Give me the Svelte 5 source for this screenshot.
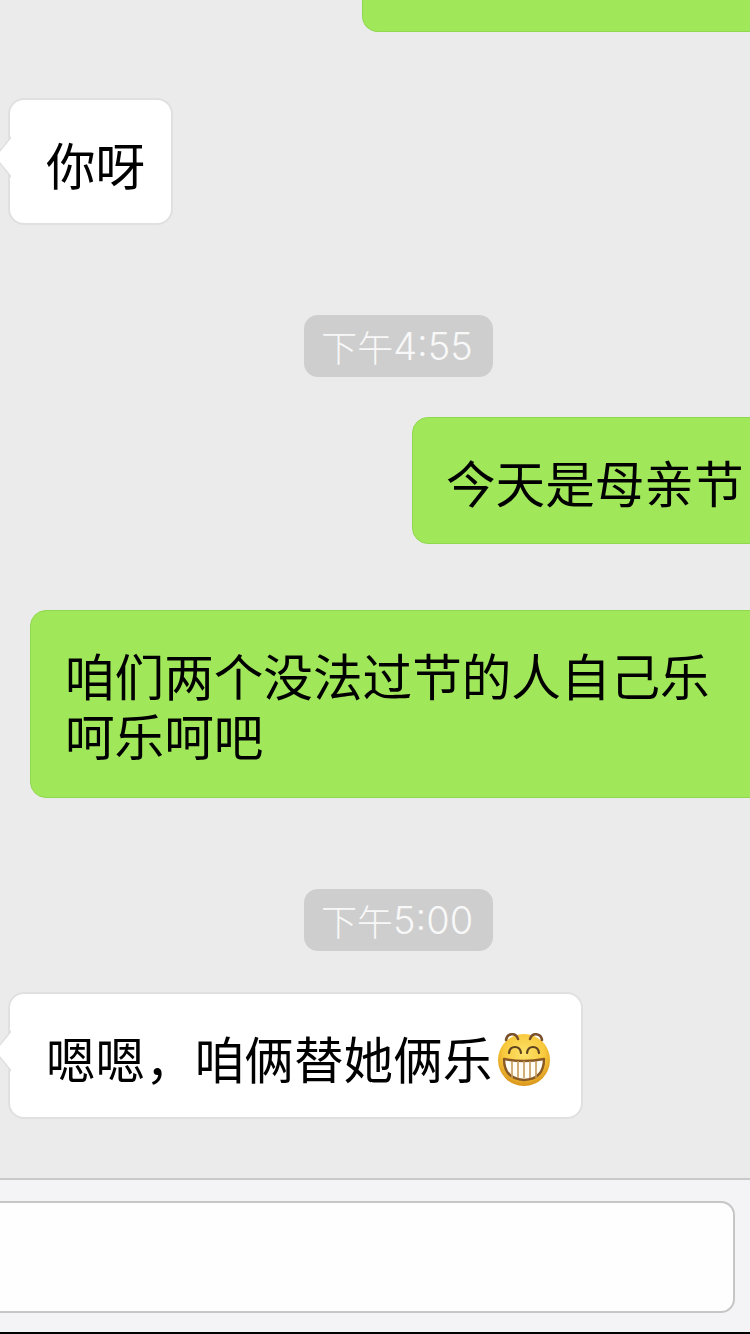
<script>
  const face = { cx: 28, cy: 29, r: 26 };
  const teeth = [16, 22, 28, 34, 40];
</script>

<div class="screen">
  <main class="chat">
    <div class="bubble mine top"></div>

    <div class="bubble theirs first">你呀</div>

    <div class="stamp first-stamp"><span>下午</span><span class="digits">4:55</span></div>

    <div class="bubble mine festival">今天是母亲节</div>
    <div class="bubble mine wide">咱们两个没法过节的人自己乐呵乐呵吧</div>

    <div class="stamp second-stamp"><span>下午</span><span class="digits">5:00</span></div>

    <div class="bubble theirs reply">
      <span>嗯嗯，咱俩替她俩乐</span>
      <svg class="emoji" viewBox="0 0 56 58" aria-hidden="true">
        <defs>
          <radialGradient id="skin" cx="50%" cy="38%" r="62%">
            <stop offset="0" stop-color="#fde26a" />
            <stop offset="0.65" stop-color="#f8c93c" />
            <stop offset="1" stop-color="#d9931a" />
          </radialGradient>
        </defs>
        <circle cx={face.cx} cy={face.cy} r={face.r} fill="url(#skin)" />
        <path class="brow" d="M10 9C11 2 20 1 22 8" />
        <path class="brow" d="M34 8C36 1 45 2 46 9" />
        <path class="eye" d="M13 22C14 14 24 14 25 22" />
        <path class="eye" d="M31 22C32 14 42 14 43 22" />
        <path class="mouth" d="M8 28Q28 32 48 28Q48 48 28 49Q8 48 8 28Z" />
        {#each teeth as x}
          <path class="gap" d="M{x} 30V47" />
        {/each}
      </svg>
    </div>
  </main>

  <footer class="bar">
    <div class="field"></div>
  </footer>
</div>

<style>
  :global(body) {
    margin: 0;
    background: #ebebeb;
  }

  .screen {
    width: 750px;
    height: 1334px;
    display: flex;
    flex-direction: column;
    overflow: hidden;
    background: #ebebeb;
    font-family: "Noto Sans CJK SC", "Noto Sans", sans-serif;
    color: #000;
  }

  .chat {
    flex: 1;
    display: flex;
    flex-direction: column;
    align-items: flex-start;
    min-height: 0;
  }

  .bubble {
    position: relative;
    box-sizing: border-box;
    font-size: 49.6px;
    line-height: 60px;
    border-radius: 16px;
    padding: 33px 36px;
  }

  .mine {
    align-self: flex-end;
    background: #a0e75a;
    border: 1px solid #91d851;
    margin-right: -16px;
  }

  .theirs {
    background: #fff;
    border: 2px solid #e0e0e0;
    margin-left: 8px;
  }

  .theirs::before,
  .theirs::after {
    content: "";
    position: absolute;
    top: 36px;
    width: 17px;
    height: 42px;
    clip-path: polygon(100% 0, 0 50%, 100% 100%);
  }

  .theirs::before {
    left: -16px;
    background: #e0e0e0;
  }

  .theirs::after {
    left: -14px;
    background: #fff;
  }

  .top {
    width: 404px;
    height: 32px;
    padding: 0;
    border-top: 0;
    border-top-left-radius: 0;
    border-top-right-radius: 0;
  }

  .first {
    margin-top: 66px;
    width: 165px;
    height: 127px;
    padding: 33px 0 0 36px;
    white-space: nowrap;
  }

  .stamp {
    align-self: flex-start;
    margin-left: 304px;
    width: 189px;
    height: 62px;
    box-sizing: border-box;
    padding-right: 3px;
    background: #cecece;
    border-radius: 14px;
    color: #f8f8f8;
    font-size: 36px;
    font-weight: 300;
    display: flex;
    align-items: center;
    justify-content: center;
  }

  .digits {
    font-family: "Inter", "Liberation Sans", sans-serif;
    font-weight: 300;
    font-size: 38px;
  }

  .first-stamp {
    margin-top: 90px;
  }

  .second-stamp {
    margin-top: 91px;
  }

  .festival {
    margin-top: 40px;
    width: 354px;
    height: 127px;
    padding-left: 33px;
    white-space: nowrap;
  }

  .wide {
    margin-top: 66px;
    width: 736px;
    height: 188px;
    padding: 33px 40px 0 34px;
  }

  .reply {
    margin-top: 41px;
    width: 575px;
    height: 127px;
    padding: 33px 0 0 36px;
    display: flex;
    align-items: flex-start;
    white-space: nowrap;
  }

  .emoji {
    width: 56px;
    height: 58px;
    margin-left: 4px;
    margin-top: 4px;
    flex: none;
  }

  .brow {
    fill: none;
    stroke: #7a4f2a;
    stroke-width: 2.6;
    stroke-linecap: round;
  }

  .eye {
    fill: none;
    stroke: #5f4320;
    stroke-width: 2.2;
    stroke-linecap: round;
  }

  .mouth {
    fill: #fffdf4;
    stroke: #8a5a24;
    stroke-width: 2.4;
    stroke-linejoin: round;
  }

  .gap {
    stroke: #c79a5a;
    stroke-width: 1.6;
  }

  .bar {
    box-sizing: border-box;
    flex: none;
    height: 156px;
    padding-top: 21px;
    background: #f4f4f6;
    border-top: 2px solid #c9c9c9;
    border-bottom: 2px solid #000;
  }

  .field {
    box-sizing: border-box;
    width: 755px;
    margin-left: -20px;
    height: 112px;
    background: #fefefe;
    border: 2px solid #c6c6c6;
    border-radius: 14px;
  }
</style>
